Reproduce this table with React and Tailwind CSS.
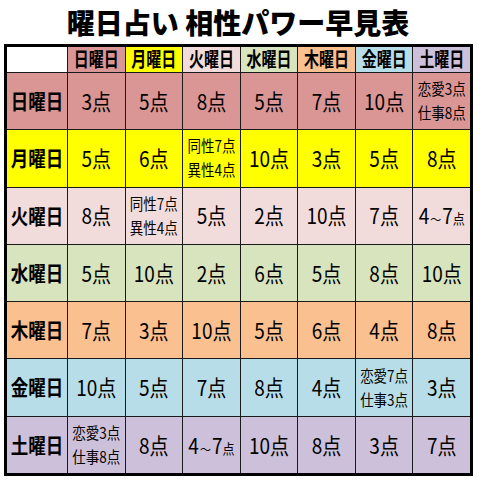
import React from "react";

const days = [
  { name: "日曜日", bg: "bg-[#d99694]" },
  { name: "月曜日", bg: "bg-[#ffff00]" },
  { name: "火曜日", bg: "bg-[#f2dcdb]" },
  { name: "水曜日", bg: "bg-[#d7e4bd]" },
  { name: "木曜日", bg: "bg-[#fac090]" },
  { name: "金曜日", bg: "bg-[#b7dee8]" },
  { name: "土曜日", bg: "bg-[#ccc0da]" },
];

// "R" = range 4~7, arrays = two-line cells
const table = [
  ["3", "5", "8", "5", "7", "10", ["恋愛3点", "仕事8点"]],
  ["5", "6", ["同性7点", "異性4点"], "10", "3", "5", "8"],
  ["8", ["同性7点", "異性4点"], "5", "2", "10", "7", "R"],
  ["5", "10", "2", "6", "5", "8", "10"],
  ["7", "3", "10", "5", "6", "4", "8"],
  ["10", "5", "7", "8", "4", ["恋愛7点", "仕事3点"], "3"],
  [["恋愛3点", "仕事8点"], "8", "R", "10", "8", "3", "7"],
];

const font = { fontFamily: '"Noto Sans CJK JP", "Noto Sans", sans-serif' };

const Value = ({ v }) => {
  if (Array.isArray(v)) {
    return (
      <div className="flex flex-col items-center text-[13.5px] leading-[21px] scale-y-115">
        <span>{v[0]}</span>
        <span>{v[1]}</span>
      </div>
    );
  }
  if (v === "R") {
    return (
      <div className="flex items-baseline text-[19px] scale-y-115">
        <span>4</span>
        <span className="text-[11px] px-px">～</span>
        <span>7</span>
        <span className="text-[12px]">点</span>
      </div>
    );
  }
  return <span className="text-[19px] scale-y-115 inline-block">{v}点</span>;
};

const App = () => {
  return (
    <div className="w-[480px] h-[480px] bg-white text-black" style={font}>
      <div className="h-[44px] flex items-center justify-center pr-[4px]">
        <h1 className="text-[28px] leading-none font-black">
          曜日占い 相性パワー早見表
        </h1>
      </div>
      <div className="ml-[4px] w-[469px] h-[432px] border-[3px] border-black bg-[#1a1a1a] grid grid-cols-[60px_repeat(7,1fr)] grid-rows-[25px_repeat(7,1fr)] gap-px">
        <div className="bg-white" />
        {days.map((d) => (
          <div key={d.name} className={`${d.bg} flex items-center justify-center`}>
            <span className="text-[15px] font-bold scale-y-[1.35] inline-block">{d.name}</span>
          </div>
        ))}
        {table.map((row, i) => (
          <React.Fragment key={i}>
            <div className={`${days[i].bg} flex items-center justify-center`}>
              <span className="text-[17.5px] font-bold scale-y-120 inline-block">{days[i].name}</span>
            </div>
            {row.map((v, j) => (
              <div key={j} className={`${days[i].bg} flex items-center justify-center`}>
                <Value v={v} />
              </div>
            ))}
          </React.Fragment>
        ))}
      </div>
    </div>
  );
};

export default App;
